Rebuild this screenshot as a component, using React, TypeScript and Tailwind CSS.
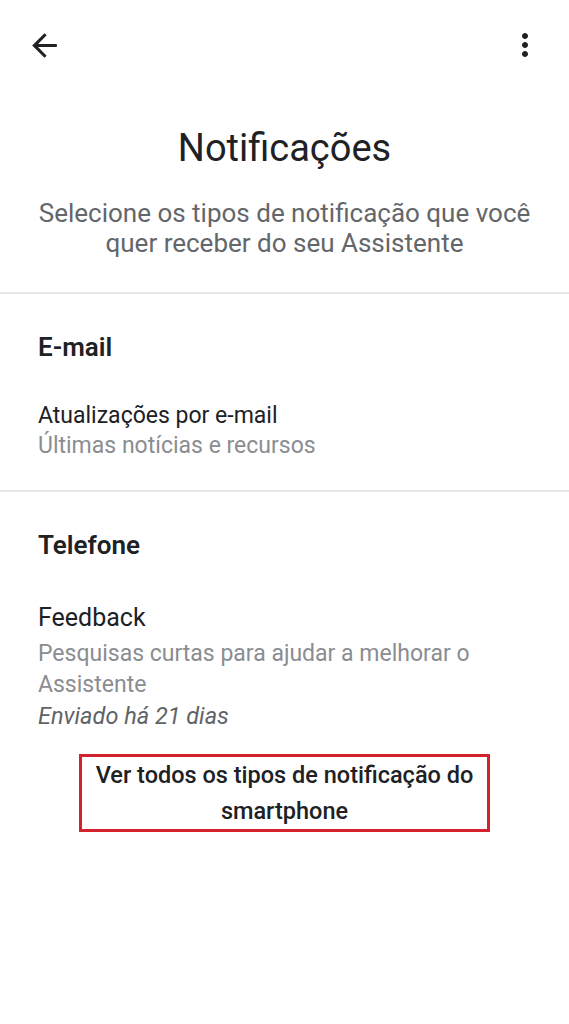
import React from "react"

function BackIcon() {
  return (
    <svg viewBox="0 0 24 24" className="h-[37px] w-[37px]" fill="#202124">
      <path d="M20 11H7.83l5.59-5.59L12 4l-8 8 8 8 1.41-1.41L7.83 13H20v-2z" />
    </svg>
  )
}

function MoreIcon() {
  return (
    <svg viewBox="0 0 24 24" className="h-[36px] w-[36px]" fill="#202124">
      <path d="M12 8c1.1 0 2-.9 2-2s-.9-2-2-2-2 .9-2 2 .9 2 2 2zm0 2c-1.1 0-2 .9-2 2s.9 2 2 2 2-.9 2-2-.9-2-2-2zm0 6c-1.1 0-2 .9-2 2s.9 2 2 2 2-.9 2-2-.9-2-2-2z" />
    </svg>
  )
}

function SectionHeader({ children }: { children: React.ReactNode }) {
  return (
    <div className="px-[38px] pt-[38px] text-[26px] leading-[30px] font-semibold text-[#202124]">
      {children}
    </div>
  )
}

export default function App() {
  return (
    <div
      className="min-h-[1024px] w-full bg-white"
      style={{ fontFamily: "Roboto, 'Noto Sans', Arial, sans-serif" }}
    >
      {/* Top bar */}
      <div className="flex h-[92px] items-start justify-between px-[26px] pt-[27px]">
        <BackIcon />
        <MoreIcon />
      </div>

      {/* Heading */}
      <div className="flex flex-col items-center px-[24px] pb-[34px] text-center">
        <h1 className="mt-[34px] text-[38px] leading-[44px] text-[#202124]">Notificações</h1>
        <p className="mt-[28px] text-[26px] leading-[30px] text-[#63666a]">
          Selecione os tipos de notificação que você quer receber do seu Assistente
        </p>
      </div>

      <div className="h-[2px] bg-[#e6e6e6]" />

      {/* E-mail */}
      <SectionHeader>E-mail</SectionHeader>
      <div className="px-[38px] pt-[39px] pb-[29px]">
        <div className="text-[23px] leading-[30px] text-[#202124]">Atualizações por e-mail</div>
        <div className="text-[23px] leading-[30px] text-[#8a8d91]">Últimas notícias e recursos</div>
      </div>

      <div className="h-[2px] bg-[#e6e6e6]" />

      {/* Telefone */}
      <SectionHeader>Telefone</SectionHeader>
      <div className="px-[38px] pt-[43px]">
        <div className="text-[25px] leading-[30px] text-[#202124]">Feedback</div>
        <div className="mt-[5px] pr-[40px] text-[23px] leading-[31px] text-[#8a8d91]">
          Pesquisas curtas para ajudar a melhorar o Assistente
        </div>
        <div className="text-[23.5px] leading-[32px] italic text-[#5f6368]">Enviado há 21 dias</div>
      </div>

      <div className="mt-[22px] flex justify-center">
        <div className="w-[411px] border-[3px] border-[#d3222e] px-1 text-center text-[23.5px] leading-[36px] font-medium text-[#202124]">
          Ver todos os tipos de notificação do smartphone
        </div>
      </div>
    </div>
  )
}
